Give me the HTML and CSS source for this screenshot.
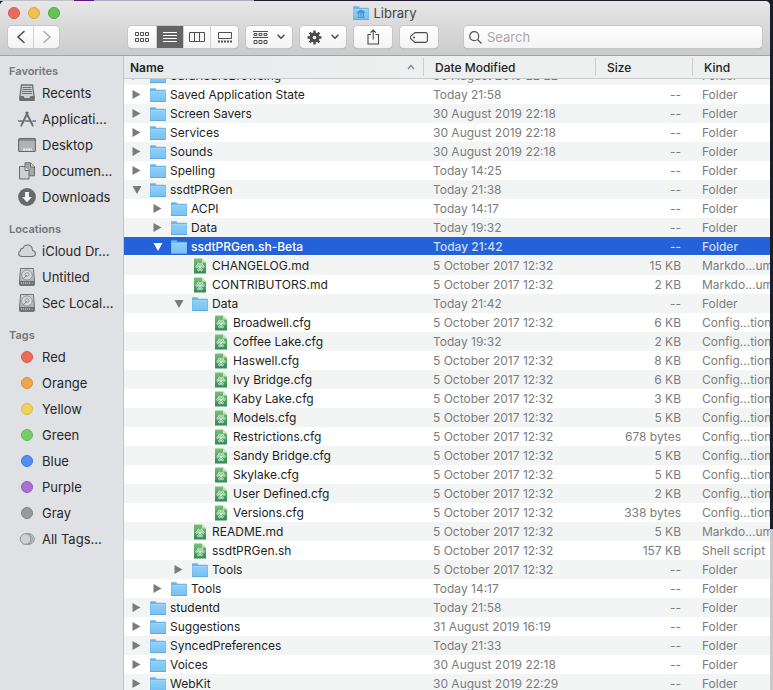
FILE: index.html
```html
<!DOCTYPE html>
<html lang="en">
<head>
<meta charset="utf-8">
<title>Library</title>
<link rel="stylesheet" href="styles.css">
</head>
<body>
<svg class="defs" aria-hidden="true">
  <defs>
    <linearGradient id="blue" x1="0" y1="0" x2="0" y2="1"><stop offset="0" stop-color="#8fd0f9"/><stop offset="1" stop-color="#78c1f3"/></linearGradient>
    <linearGradient id="green" x1="0" y1="0" x2="0" y2="1"><stop offset="0" stop-color="#7cc074"/><stop offset="1" stop-color="#2f8a55"/></linearGradient>
    <linearGradient id="metal" x1="0" y1="0" x2="0" y2="1"><stop offset="0" stop-color="#d2d3d5"/><stop offset="1" stop-color="#a4a5a7"/></linearGradient>
  </defs>
  <symbol id="folder" viewBox="0 0 16 16">
    <path d="M0 14.500V2q0-.8.8-.8h4.400q.6 0 .9.9l.2.6h8.900q.8 0 .8.8V14.500z" fill="#6cb5e6"/>
    <path d="M.5 14V4.300h15V14z" fill="url(#blue)"/>
    <path d="M0 14.500h16" stroke="#5ba5d6" stroke-width=".9"/>
    <path d="M.5 4.500h15" stroke="#a5dafa" stroke-width=".7"/>
  </symbol>
  <symbol id="file" viewBox="0 0 12 16">
    <path d="M0 .5h8L12 4.500V15.500H0z" fill="url(#green)"/>
    <path d="M8 .5L12 4.500H8z" fill="#c3e6bd"/>
    <g fill="none" stroke="#e0f3e4" stroke-width=".9"><circle cx="4.500" cy="6.200" r="1"/><circle cx="7.500" cy="6.200" r="1"/><circle cx="2.800" cy="8.500" r="1"/><circle cx="9.200" cy="8.500" r="1"/><circle cx="4.600" cy="11.800" r="1"/><circle cx="7.400" cy="11.800" r="1"/><path d="M4.800 7.200L6 9l1.200-1.800M3.800 8.600L6 9l2.200-.4M4.800 10.800L6 9l1.200 1.800"/></g>
  </symbol>
  <symbol id="disk" viewBox="0 0 18 18">
    <path d="M2.600.5h12.800l1.100 12.500v3.500q0 1-1 1H2.500q-1 0-1-1V13z" fill="url(#metal)" stroke="#727375"/>
    <path d="M1.500 13h15v4h-15z" fill="#707173"/>
    <ellipse cx="9" cy="7" rx="5.300" ry="5" fill="#d9dadc" stroke="#88898b" stroke-width=".8"/>
    <circle cx="9" cy="6.500" r="2" fill="none" stroke="#88898b" stroke-width=".8"/>
    <path d="M9 7l-4 4" stroke="#88898b"/>
    <path d="M3.500 14v2M5.500 14v2M7.500 14v2M9.500 14v2M11.500 14v2M14 14.500v1" stroke="#c2c3c5" stroke-width=".8"/>
  </symbol>
  <symbol id="chevron" viewBox="0 0 8 6"><path d="M1 1.200l3 3.100 3-3.100" fill="none" stroke="#4b4b4b" stroke-width="1.500" stroke-linecap="round" stroke-linejoin="round"/></symbol>
</svg>

<div class="window">
  <header class="titlebar">
    <div class="title-row">
      <div class="lights">
        <button class="light close" aria-label="Close"></button>
        <button class="light minimize" aria-label="Minimize"></button>
        <button class="light zoom" aria-label="Zoom"></button>
      </div>
      <h1 class="title">
        <svg width="16" height="16" viewBox="0 0 16 16"><use href="#folder"/><path d="M8 5l-3.700 2v.7h7.400V7zM4.200 12.500h7.600M5.500 8v4M7.200 8v4M8.800 8v4M10.500 8v4" fill="#4b94c8" stroke="#4b94c8" stroke-width=".9"/></svg>
        <span>Library</span>
      </h1>
    </div>
    <div class="toolbar">
      <div class="group nav">
        <button aria-label="Back"><svg width="10" height="14" viewBox="0 0 10 14"><path d="M8 1.500L2 7l6 5.500" fill="none" stroke="#484848" stroke-width="1.500" stroke-linecap="round"/></svg></button>
        <button aria-label="Forward"><svg width="10" height="14" viewBox="0 0 10 14"><path d="M2 1.500L8 7l-6 5.500" fill="none" stroke="#adadad" stroke-width="1.500" stroke-linecap="round"/></svg></button>
      </div>
      <div class="group views">
        <button aria-label="Icon view"><svg width="14" height="11" viewBox="0 0 14 11"><path d="M.5.5h3v3h-3zM5.500.5h3v3h-3zM10.500.5h3v3h-3zM.5 6.500h3v3h-3zM5.500 6.500h3v3h-3zM10.500 6.500h3v3h-3z" fill="none" stroke="#505050"/></svg></button>
        <button class="active" aria-label="List view"><svg width="14" height="11" viewBox="0 0 14 11"><path d="M0 .5h14M0 3.500h14M0 6.500h14M0 9.500h14" stroke="#fff"/></svg></button>
        <button aria-label="Column view"><svg width="16" height="11" viewBox="0 0 16 11"><path d="M.5.500h15v9H.5zM5.500.500v9M10.500.500v9" fill="none" stroke="#505050"/></svg></button>
        <button aria-label="Gallery view"><svg width="14" height="11" viewBox="0 0 14 11"><path d="M.5.500h13v6H.5z" fill="none" stroke="#505050"/><path d="M0 9.500h14" stroke="#505050" stroke-width="2" stroke-dasharray="2 1"/></svg></button>
      </div>
      <button class="tool menu" aria-label="Group by">
        <svg width="15" height="13" viewBox="0 0 15 13"><path d="M0 .5h15M0 6.500h15M1 2.500h3v2H1zM6 2.500h3v2H6zM11 2.500h3v2h-3zM1 9.500h3v3H1zM6 9.500h3v3H6zM11 9.500h3v3h-3z" fill="none" stroke="#505050"/></svg>
        <svg width="8" height="6"><use href="#chevron"/></svg>
      </button>
      <button class="tool menu" aria-label="Action">
        <svg width="15" height="15" viewBox="0 0 15 15"><path d="M7.500.500v14M.500 7.500h14M2.600 2.600l9.800 9.800M12.400 2.600l-9.800 9.800" stroke="#4b4b4b" stroke-width="2.400"/><circle cx="7.500" cy="7.500" r="5" fill="#4b4b4b"/><circle cx="7.500" cy="7.500" r="1.800" fill="#f7f7f7"/></svg>
        <svg width="8" height="6"><use href="#chevron"/></svg>
      </button>
      <button class="tool" aria-label="Share"><svg width="13" height="16" viewBox="0 0 13 16"><path d="M4 5.500H1v9.500h10.500V5.500h-3M6.200 10.500V1M3.500 3.700L6.200 1l2.700 2.700" fill="none" stroke="#4b4b4b" stroke-width="1.100"/></svg></button>
      <button class="tool" aria-label="Edit tags"><svg width="18" height="11" viewBox="0 0 18 11"><path d="M5 .6h10.500q1.900 0 1.900 1.900v6q0 1.900-1.900 1.900H5L.9 7Q0 5.500.9 4z" fill="none" stroke="#4b4b4b" stroke-width="1.100"/><circle cx="4" cy="5.500" r="1" fill="#4b4b4b"/></svg></button>
      <label class="search">
        <svg width="13" height="13" viewBox="0 0 13 13"><circle cx="5.200" cy="5.200" r="4.500" fill="none" stroke="#555" stroke-width="1.200"/><path d="M8.500 8.500l4 4" stroke="#555" stroke-width="1.300"/></svg>
        <input type="search" placeholder="Search" aria-label="Search">
      </label>
    </div>
  </header>

  <div class="main">
    <nav class="sidebar">
      <h2>Favorites</h2>
      <a href="#recents"><svg width="18" height="18" viewBox="0 0 18 18"><path d="M3.500 1h11l1.500 11v4H2v-4z" fill="#cfd0d2" stroke="#6e6f71" stroke-width="1.300"/><path d="M1.500 12h4l1 2h5l1-2h4v4q0 1-1 1h-13q-1 0-1-1z" fill="#6e6f71"/><path d="M4.500 3.500h9M4.500 5.500h9M4 7.500h10M4 9.500h10" stroke="#6e6f71"/></svg><span>Recents</span></a>
      <a href="#applications"><svg width="18" height="18" viewBox="0 0 18 18"><path d="M8 2l6.500 13M10 2L3.500 15" stroke="#6b6c6e" stroke-width="1.900"/><path d="M0 11h4.500M7 11h5M14.500 11H18M3.800 14.500L2.800 16.500M14.200 14.500l1 2" stroke="#6b6c6e" stroke-width="1.500"/></svg><span>Applicati...</span></a>
      <a href="#desktop"><svg width="18" height="18" viewBox="0 0 18 18"><rect x=".6" y="2.500" width="16.800" height="13" rx="1" fill="#b1b2b4" stroke="#67686a" stroke-width="1.100"/><path d="M1 4h16" stroke="#67686a"/><path d="M5 13.500h9" stroke="#eee" stroke-width="2" stroke-dasharray="2 .5"/></svg><span>Desktop</span></a>
      <a href="#documents"><svg width="18" height="18" viewBox="0 0 18 18"><path d="M7 .8h5.500l4 4v9H7z" fill="#a6a7a9" stroke="#6b6c6e"/><path d="M12.500 1v4h4" fill="#d5d6d8" stroke="#6b6c6e"/><path d="M1.500 4.500h5.500l4 4v8.500H1.500z" fill="#ced0d2" stroke="#6b6c6e"/><path d="M7 4.500v4h4" fill="#e5e6e8" stroke="#6b6c6e"/></svg><span>Documen...</span></a>
      <a href="#downloads"><svg width="18" height="18" viewBox="0 0 18 18"><circle cx="9" cy="9" r="8.900" fill="#68696b"/><path d="M7 4h4v5h3l-5 5.200L4 9h3z" fill="#f2f3f5"/></svg><span>Downloads</span></a>
      <h2>Locations</h2>
      <a href="#icloud"><svg width="18" height="18" viewBox="0 0 18 18"><path d="M4.500 14.500h9.500q3.400-.2 3.400-3 0-2.500-2.800-3Q14 3 9.500 3 6 3 5 6.200 2.500 6 2.500 8.800.6 9.500.6 11.500q0 3 3.900 3z" fill="#d4d5d7" stroke="#707173" stroke-width="1.100"/></svg><span>iCloud Dr...</span></a>
      <a href="#untitled"><svg width="18" height="18"><use href="#disk"/></svg><span>Untitled</span></a>
      <a href="#sec-local"><svg width="18" height="18"><use href="#disk"/></svg><span>Sec Local...</span></a>
      <h2>Tags</h2>
      <a href="#red"><i class="tag red"></i><span>Red</span></a>
      <a href="#orange"><i class="tag orange"></i><span>Orange</span></a>
      <a href="#yellow"><i class="tag yellow"></i><span>Yellow</span></a>
      <a href="#green-tag"><i class="tag green"></i><span>Green</span></a>
      <a href="#blue-tag"><i class="tag blue"></i><span>Blue</span></a>
      <a href="#purple"><i class="tag purple"></i><span>Purple</span></a>
      <a href="#gray"><i class="tag gray"></i><span>Gray</span></a>
      <a href="#all-tags"><svg width="18" height="18" viewBox="0 0 18 18"><g fill="#cfd0d2" stroke="#929395"><circle cx="11" cy="9" r="5.300"/><circle cx="9" cy="9" r="5.300"/><circle cx="7.500" cy="9" r="5.300"/></g></svg><span>All Tags...</span></a>
    </nav>

    <div class="list">
      <table>
        <colgroup><col class="col-name"><col class="col-date"><col class="col-size"><col></colgroup>
        <thead>
          <tr>
            <th aria-sort="ascending"><button><span>Name</span><svg width="8" height="6" viewBox="0 0 8 6"><path d="M1 5l3-3.500L7 5" fill="none" stroke="#808080" stroke-width="1.200"/></svg></button></th>
            <th><button>Date Modified</button></th>
            <th><button>Size</button></th>
            <th><button>Kind</button></th>
          </tr>
        </thead>
        <tbody id="rows"></tbody>
      </table>
    </div>
  </div>
</div>
<script src="list.js"></script>
</body>
</html>
```
FILE: list.js
```js
// name, nesting level, state (closed / open folder, or file), date, size, kind
const OCT = "5 October 2017 12:32";
const entries = [
  ["SafariSafeBrowsing", 0, "closed", "30 August 2019 22:22", "--", "Folder"],
  ["Saved Application State", 0, "closed", "Today 21:58", "--", "Folder"],
  ["Screen Savers", 0, "closed", "30 August 2019 22:18", "--", "Folder"],
  ["Services", 0, "closed", "30 August 2019 22:18", "--", "Folder"],
  ["Sounds", 0, "closed", "30 August 2019 22:18", "--", "Folder"],
  ["Spelling", 0, "closed", "Today 14:25", "--", "Folder"],
  ["ssdtPRGen", 0, "open", "Today 21:38", "--", "Folder"],
  ["ACPI", 1, "closed", "Today 14:17", "--", "Folder"],
  ["Data", 1, "closed", "Today 19:32", "--", "Folder"],
  ["ssdtPRGen.sh-Beta", 1, "open", "Today 21:42", "--", "Folder", true],
  ["CHANGELOG.md", 2, "file", OCT, "15 KB", "Markdo...um"],
  ["CONTRIBUTORS.md", 2, "file", OCT, "2 KB", "Markdo...um"],
  ["Data", 2, "open", "Today 21:42", "--", "Folder"],
  ["Broadwell.cfg", 3, "file", OCT, "6 KB", "Config...tion"],
  ["Coffee Lake.cfg", 3, "file", "Today 19:32", "2 KB", "Config...tion"],
  ["Haswell.cfg", 3, "file", OCT, "8 KB", "Config...tion"],
  ["Ivy Bridge.cfg", 3, "file", OCT, "6 KB", "Config...tion"],
  ["Kaby Lake.cfg", 3, "file", OCT, "3 KB", "Config...tion"],
  ["Models.cfg", 3, "file", OCT, "5 KB", "Config...tion"],
  ["Restrictions.cfg", 3, "file", OCT, "678 bytes", "Config...tion"],
  ["Sandy Bridge.cfg", 3, "file", OCT, "5 KB", "Config...tion"],
  ["Skylake.cfg", 3, "file", OCT, "5 KB", "Config...tion"],
  ["User Defined.cfg", 3, "file", OCT, "2 KB", "Config...tion"],
  ["Versions.cfg", 3, "file", OCT, "338 bytes", "Config...tion"],
  ["README.md", 2, "file", OCT, "5 KB", "Markdo...um"],
  ["ssdtPRGen.sh", 2, "file", OCT, "157 KB", "Shell script"],
  ["Tools", 2, "closed", OCT, "--", "Folder"],
  ["Tools", 1, "closed", "Today 14:17", "--", "Folder"],
  ["studentd", 0, "closed", "Today 21:58", "--", "Folder"],
  ["Suggestions", 0, "closed", "31 August 2019 16:19", "--", "Folder"],
  ["SyncedPreferences", 0, "closed", "Today 21:33", "--", "Folder"],
  ["Voices", 0, "closed", "30 August 2019 22:18", "--", "Folder"],
  ["WebKit", 0, "closed", "30 August 2019 22:29", "--", "Folder"],
];

document.getElementById("rows").innerHTML = entries.map(([name, level, state, date, size, kind, selected]) => {
  const isFile = state === "file";
  const toggle = isFile
    ? '<span class="toggle"></span>'
    : `<button class="toggle ${state}" aria-label="Toggle ${name}" aria-expanded="${state === "open"}"></button>`;
  const icon = `<svg class="icon" width="16" height="16"><use href="#${isFile ? "file" : "folder"}"/></svg>`;
  return `<tr${selected ? ' class="selected"' : ""}>
    <td><div class="name level-${level}">${toggle}${icon}<span>${name}</span></div></td>
    <td>${date}</td><td>${size}</td><td>${kind}</td></tr>`;
}).join("");

// The list opens slightly scrolled, under its sticky header.
document.querySelector(".list").scrollTop = 13;
```
FILE: styles.css
```css
* { box-sizing: border-box; }

html, body { height: 100%; }

body {
  margin: 0;
  padding: 1px 3px 0 0;
  overflow: hidden;
  background:
    linear-gradient(90deg, #bfc0c8 74px, #5a1585 74px 94px, #a9abc0 94px 254px, #1d1b2b 254px) top / 100% 1px no-repeat,
    linear-gradient(#1c1d28 529px, #c9c9c9 529px);
  font-family: Inter, "Liberation Sans", sans-serif;
  font-size: 12px;
  color: #222;
}

button {
  margin: 0;
  padding: 0;
  border: 0;
  background: none;
  font: inherit;
  color: inherit;
}

svg { display: block; flex: none; }
.defs { position: absolute; width: 0; height: 0; }

.window {
  display: flex;
  flex-direction: column;
  height: 100%;
  border-radius: 5px 5px 0 0;
  overflow: hidden;
  background: #fff;
}

/* Title bar */
.titlebar {
  flex: none;
  height: 55px;
  border-bottom: 1px solid #a3a3a3;
  background: linear-gradient(#e8e7e8, #cbcbcb);
}

.title-row {
  display: grid;
  grid-template-columns: 1fr auto 1fr;
  align-items: center;
  height: 23px;
  padding: 0 8px;
}

.lights { display: flex; gap: 8px; }
.light { width: 12px; height: 12px; border-radius: 50%; border: 1px solid; }
.close { background: #ed6a5e; border-color: #d5574c; }
.minimize { background: #f4bf4b; border-color: #d8a23a; }
.zoom { background: #61c554; border-color: #4fa73f; }

.title {
  display: flex;
  align-items: center;
  gap: 4px;
  margin: 0;
  font-size: 13px;
  font-weight: 400;
  color: #444;
}

.toolbar {
  display: flex;
  gap: 8px;
  padding: 2px 8px 0;
}

.group, .tool, .search {
  height: 22px;
  border-radius: 4px;
  background: linear-gradient(#fff, #f3f3f3);
  box-shadow: 0 0 0 1px #c6c6c6, 0 1px 1px #999;
}

.group { display: flex; overflow: hidden; }
.group button, .tool { display: flex; align-items: center; justify-content: center; }
.group button + button { border-left: 1px solid #d0d0d0; }
.nav button { width: 25px; }
.nav button + button { width: 26px; }
.nav { margin-right: 61px; }
.views button { width: 27px; }
.views button:first-child, .views button:last-child { width: 28px; }
.views .active { background: #636463; }
.tool { width: 38px; }
.tool.menu { width: 46px; gap: 9px; }

.search {
  display: flex;
  flex: 1;
  align-items: center;
  gap: 5px;
  margin-left: 18px;
  padding: 0 5px;
}

.search input {
  flex: 1;
  min-width: 0;
  padding: 0;
  border: 0;
  outline: 0;
  background: none;
  font: 13px Inter, "Liberation Sans", sans-serif;
}
.search input::placeholder { color: #a9a9a9; }

/* Body */
.main { display: flex; flex: 1; min-height: 0; }

.sidebar {
  flex: none;
  width: 124px;
  padding-top: 6px;
  overflow: hidden;
  border-right: 1px solid #c3c4c6;
  background: #e0e1e4;
}

.sidebar h2 {
  margin: 10px 0 0;
  padding-left: 9px;
  font-size: 11px;
  font-weight: 600;
  line-height: 18px;
  color: #747577;
}
.sidebar h2:first-child { margin-top: 0; }

.sidebar a {
  display: flex;
  align-items: center;
  gap: 6px;
  height: 26px;
  padding-left: 18px;
  font-size: 13px;
  color: #272829;
  text-decoration: none;
  white-space: nowrap;
}

.tag {
  width: 12px;
  height: 12px;
  margin: 0 3px;
  border: 1px solid;
  border-radius: 50%;
}
.red { background: #ed6b59; border-color: #dd5547; }
.orange { background: #eea550; border-color: #dc913c; }
.yellow { background: #f2d05c; border-color: #ddba48; }
.green { background: #77cd69; border-color: #62b855; }
.blue { background: #568df4; border-color: #3c77e6; }
.purple { background: #ab6fd3; border-color: #9758c2; }
.gray { background: #99999b; border-color: #858587; }

/* File list */
.list { flex: 1; min-width: 0; overflow: hidden; }

table {
  width: 100%;
  table-layout: fixed;
  border-collapse: separate;
  border-spacing: 0;
}
.col-name { width: 300px; }
.col-date { width: 172px; }
.col-size { width: 97px; }

th {
  position: sticky;
  top: 0;
  z-index: 1;
  height: 23px;
  padding: 2px 0;
  border-bottom: 1px solid #c8c9c9;
  background: #eeefef;
  font-weight: 500;
  text-align: left;
}
th:first-child { background: linear-gradient(90deg, #e6ebee, #eeefef); font-weight: 600; }

th button {
  display: flex;
  align-items: center;
  justify-content: space-between;
  width: 100%;
  height: 18px;
  padding: 0 8px 0 11px;
  border-right: 1px solid #cdcdcd;
}
th:first-child button { padding-left: 6px; }
th:last-child button { border-right: 0; }

td {
  height: 19px;
  padding: 0 0 0 9px;
  overflow: hidden;
  line-height: 18px;
  color: #7b7c7c;
  white-space: nowrap;
}
td:first-child { padding: 0; color: #1e1e1e; }
td:nth-child(3) { padding: 0 12px 0 0; text-align: right; }
tbody tr:nth-child(odd) td { background: #f3f5f5; }

tbody .selected td {
  background: #2562d9;
  box-shadow: inset 0 -1px #fff;
  color: #cddbf7;
  font-weight: 500;
}
tbody .selected td:first-child { color: #fff; }

.name { display: flex; align-items: center; padding-left: 8px; }
.level-1 { padding-left: 29px; }
.level-2 { padding-left: 50px; }
.level-3 { padding-left: 71px; }
.icon { margin-right: 4px; }

.toggle { width: 10px; height: 10px; margin-right: 8px; background: #7b7b7b; }
span.toggle { background: none; }
.toggle.closed { clip-path: polygon(5% 5%, 85% 50%, 5% 95%); }
.toggle.open { clip-path: polygon(5% 15%, 95% 15%, 50% 95%); }
.selected .toggle { background: #fff; }
```
